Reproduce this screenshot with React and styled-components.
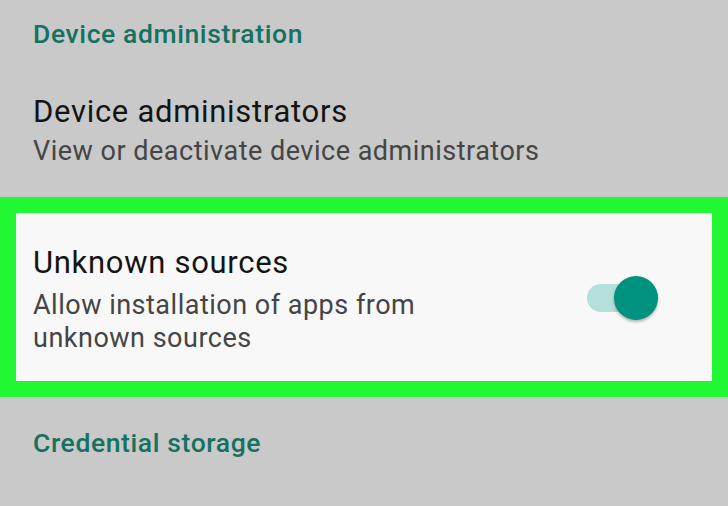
import React from 'react';
import styled, { createGlobalStyle } from 'styled-components';

const GlobalStyle = createGlobalStyle`
  html, body {
    margin: 0;
    padding: 0;
    background: #c9c9c9;
  }
  body {
    font-family: Roboto, "Noto Sans", "Liberation Sans", sans-serif;
    -webkit-font-smoothing: antialiased;
  }
`;

const Screen = styled.div`
  width: 728px;
  height: 506px;
  overflow: hidden;
  background: #c9c9c9;
  display: flex;
  flex-direction: column;
`;

const SectionHeader = styled.div`
  padding: ${p => p.$top}px 33px 0;
  line-height: 36px;
  font-size: 26.5px;
  font-weight: 500;
  color: #167160;
  letter-spacing: 0.6px;
`;

const Row = styled.div`
  display: flex;
  align-items: center;
  padding: ${p => p.$pad};
  background: ${p => (p.$highlight ? '#f8f8f8' : 'transparent')};
  border: ${p => (p.$highlight ? '16px solid #22f733' : 'none')};
  padding-left: ${p => (p.$highlight ? 17 : 33)}px;
`;

const TextBlock = styled.div`
  flex: 1;
  max-width: ${p => p.$max || 640}px;
  display: flex;
  flex-direction: column;
`;

const Title = styled.div`
  font-size: 31px;
  line-height: 36px;
  letter-spacing: 0.7px;
  color: #141414;
`;

const Summary = styled.div`
  margin-top: ${p => p.$gap}px;
  font-size: 27px;
  line-height: 33px;
  letter-spacing: 0.5px;
  color: #454545;
`;

const Toggle = styled.div`
  position: relative;
  width: 70px;
  height: 28px;
  margin: -4px 55px 0 auto;
  border-radius: 14px;
  background: #b4dfdb;
`;

const Thumb = styled.span`
  position: absolute;
  top: -8px;
  right: -1px;
  width: 44px;
  height: 44px;
  border-radius: 50%;
  background: #00917f;
  box-shadow: 0 2px 3px rgba(0, 0, 0, 0.28);
`;

export default function App() {
  return (
    <Screen>
      <GlobalStyle />
      <SectionHeader $top={16}>Device administration</SectionHeader>
      <Row $pad="42px 33px 29px">
        <TextBlock>
          <Title>Device administrators</Title>
          <Summary $gap={5}>View or deactivate device administrators</Summary>
        </TextBlock>
      </Row>
      <Row $highlight $pad="32px 0 26px">
        <TextBlock $max={460}>
          <Title>Unknown sources</Title>
          <Summary $gap={8}>Allow installation of apps from unknown sources</Summary>
        </TextBlock>
        <Toggle>
          <Thumb />
        </Toggle>
      </Row>
      <SectionHeader $top={28}>Credential storage</SectionHeader>
    </Screen>
  );
}
